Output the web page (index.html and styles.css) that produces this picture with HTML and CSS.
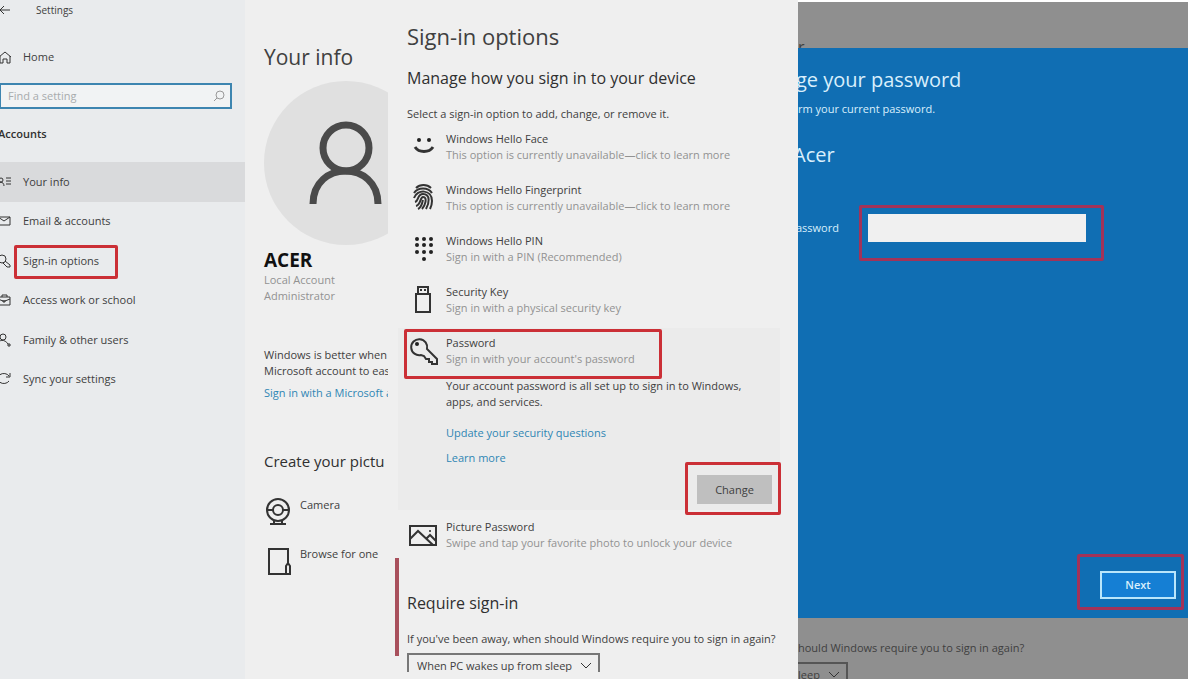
FILE: index.html
```html
<!DOCTYPE html>
<html lang="en">
<head>
  <meta charset="UTF-8" />
  <meta name="viewport" content="width=device-width, initial-scale=1.0"/>
  <title>Settings</title>
  <link rel="stylesheet" href="styles.css">
</head>
<body>
  <div class="page">
    <aside class="sidebar">
      <header class="topbar">
        <button class="back" aria-label="Back">
          <svg width="14" height="12" viewBox="0 0 14 12"><path d="M13 6H3M7 2L3 6l4 4"/></svg>
        </button>
        <span>Settings</span>
      </header>
      <a class="nav-link home" href="#">
        <svg width="14" height="14" viewBox="0 0 14 14"><path d="M2 7l6-5 6 5M3 6v7h3V9h4v4h3V6"/></svg>
        Home
      </a>
      <div class="search">
        <input type="text" placeholder="Find a setting" aria-label="Find a setting">
        <svg width="12" height="12" viewBox="0 0 12 12"><circle cx="7" cy="5" r="4"/><path d="M4 8l-3 3"/></svg>
      </div>
      <h2 class="group">Accounts</h2>
      <nav class="nav">
        <a class="nav-link active" href="#">
          <svg width="14" height="14" viewBox="0 0 14 14"><circle cx="4" cy="5" r="2"/><path d="M1 11c0-5 6-5 6 0M9 3h5M9 6h5M9 9h5"/></svg>
          Your info
        </a>
        <a class="nav-link" href="#">
          <svg width="14" height="14" viewBox="0 0 14 14"><path d="M1 3h12v8H1zM1 3l6 4 6-4"/></svg>
          Email &amp; accounts
        </a>
        <a class="nav-link" href="#">
          <svg width="14" height="14" viewBox="0 0 14 14"><circle cx="5" cy="5" r="4"/><path d="M8 7l5 4v2h-3l-4-4"/></svg>
          <span class="marked mark-nav">Sign-in options</span>
        </a>
        <a class="nav-link" href="#">
          <svg width="14" height="14" viewBox="0 0 14 14"><path d="M1 4h12v8H1zM5 4V2h5v2M1 6l5 2h2l5-2M6 7v2h2V7"/></svg>
          Access work or school
        </a>
        <a class="nav-link" href="#">
          <svg width="14" height="14" viewBox="0 0 14 14"><circle cx="6" cy="4" r="3"/><path d="M1 12c0-6 7-6 10-1M10 12h4M12 10v4"/></svg>
          Family &amp; other users
        </a>
        <a class="nav-link" href="#">
          <svg width="14" height="14" viewBox="0 0 14 14"><path d="M12 9a6 5 0 1 1 0-5M13 1v4H9"/></svg>
          Sync your settings
        </a>
      </nav>
    </aside>

    <section class="info">
      <h1>Your info</h1>
      <svg class="avatar" width="164" height="164" viewBox="0 0 164 164">
        <circle class="disc" cx="82" cy="82" r="82"/>
        <circle cx="82" cy="67" r="23"/>
        <path d="M49 123c0-44 65-44 65 0"/>
      </svg>
      <h2 class="user">ACER</h2>
      <p class="muted">Local Account<br>Administrator</p>
      <p class="better">Windows is better when<br>Microsoft account to eas</p>
      <a class="link" href="#">Sign in with a Microsoft a</a>
      <h2 class="create">Create your pictu</h2>
      <button class="source">
        <svg width="28" height="28" viewBox="0 0 28 28"><circle cx="14" cy="13" r="11"/><circle cx="14" cy="13" r="5"/><path d="M3 13h6M19 13h6M10 23v4M18 23v4M6 27h16"/></svg>
        Camera
      </button>
      <button class="source">
        <svg width="28" height="30" viewBox="0 0 28 30"><path d="M24 18V3H5v25h19M22 28v-8l2-3 2 3v8z"/></svg>
        Browse for one
      </button>
    </section>

    <main class="signin">
      <h1>Sign-in options</h1>
      <h2>Manage how you sign in to your device</h2>
      <p class="lead">Select a sign-in option to add, change, or remove it.</p>

      <div class="option">
        <svg width="32" height="32" viewBox="0 0 32 32"><g class="solid"><circle cx="12" cy="9" r="2"/><circle cx="22" cy="9" r="2"/></g><path class="thick" d="M8 16c4 6 14 6 18 0"/></svg>
        <div><h3>Windows Hello Face</h3><p class="muted">This option is currently unavailable—click to learn more</p></div>
      </div>
      <div class="option">
        <svg width="32" height="32" viewBox="0 0 32 32"><path d="M9 6c4-4 11-4 15 0M7 11c4-6 14-6 18 0M7 16c3-9 18-9 18 3 0 4-1 6-2 8M8 20c4-1 2-8 8-8 8 0 6 10 3 15M9 24c5-1 4-9 7-9 5 0 2 9-1 12M11 27c4-2 4-6 5-9"/></svg>
        <div><h3>Windows Hello Fingerprint</h3><p class="muted">This option is currently unavailable—click to learn more</p></div>
      </div>
      <div class="option">
        <svg width="32" height="32" viewBox="0 0 32 32"><g class="solid"><circle cx="10" cy="6" r="2"/><circle cx="17" cy="6" r="2"/><circle cx="24" cy="6" r="2"/><circle cx="10" cy="12" r="2"/><circle cx="17" cy="12" r="2"/><circle cx="24" cy="12" r="2"/><circle cx="10" cy="19" r="2"/><circle cx="17" cy="19" r="2"/><circle cx="24" cy="19" r="2"/><circle cx="17" cy="26" r="2"/></g></svg>
        <div><h3>Windows Hello PIN</h3><p class="muted">Sign in with a PIN (Recommended)</p></div>
      </div>
      <div class="option">
        <svg width="32" height="32" viewBox="0 0 32 32"><path d="M9 10h14v18H9zM11 10V3h10v7M13 6h2M17 6h2"/></svg>
        <div><h3>Security Key</h3><p class="muted">Sign in with a physical security key</p></div>
      </div>

      <div class="panel">
        <div class="option marked mark-password">
          <svg width="32" height="32" viewBox="0 0 32 32"><path d="M20 14a8 8 0 1 0-6 6l3 1 2 3h3v3h3v2h5v-5z"/><circle class="dot" cx="10" cy="9" r="2"/></svg>
          <div><h3>Password</h3><p class="muted">Sign in with your account's password</p></div>
        </div>
        <div class="details">
          <p>Your account password is all set up to sign in to Windows,<br>apps, and services.</p>
          <a class="link" href="#">Update your security questions</a>
          <a class="link" href="#">Learn more</a>
          <button class="change marked mark-change">Change</button>
        </div>
      </div>

      <div class="option">
        <svg width="32" height="32" viewBox="0 0 32 32"><path d="M3 7h26v19H3zM3 20l8-8 15 14M19 20l4-4 6 6"/><circle class="dot" cx="23" cy="12" r="1"/></svg>
        <div><h3>Picture Password</h3><p class="muted">Swipe and tap your favorite photo to unlock your device</p></div>
      </div>

      <h2 class="require">Require sign-in</h2>
      <label for="wake">If you've been away, when should Windows require you to sign in again?</label>
      <div class="select-clip">
        <select id="wake"><option>When PC wakes up from sleep</option></select>
        <svg width="12" height="8" viewBox="0 0 12 8"><path d="M1 1l5 5 5-5"/></svg>
      </div>
    </main>

    <section class="overlay">
      <div class="behind-top">r</div>
      <form class="dialog">
        <h1>ge your password</h1>
        <p>rm your current password.</p>
        <h2>Acer</h2>
        <div class="field">
          <label for="current">assword</label>
          <span class="marked mark-input"><input type="password" id="current"></span>
        </div>
        <button type="button" class="next marked mark-next">Next</button>
      </form>
      <div class="behind-bottom">
        <p>hould Windows require you to sign in again?</p>
        <div class="select-clip">
          <select aria-label="Require sign-in"><option>leep</option></select>
          <svg width="12" height="8" viewBox="0 0 12 8"><path d="M1 1l5 5 5-5"/></svg>
        </div>
      </div>
    </section>
  </div>
</body>
</html>
```

FILE: styles.css
```css
* {
  box-sizing: border-box;
}
body {
  margin: 0;
  font-family: "Open Sans", "Noto Sans", sans-serif;
  font-size: 11px;
  line-height: 16px;
  color: #404040;
  background: #efefef;
}
h1, h2, h3, p {
  margin: 0;
  font-weight: 400;
}
h1 {
  font-size: 22px;
  line-height: 28px;
}
h2 {
  font-size: 16px;
  line-height: 24px;
  color: #303030;
}
h3 {
  font-size: 11px;
  line-height: 16px;
}
a {
  color: inherit;
  text-decoration: none;
}
button, input, select {
  font: inherit;
  color: inherit;
  border: none;
  border-radius: 0;
}
button {
  padding: 0;
  background: none;
  cursor: pointer;
}
svg {
  flex: none;
  fill: none;
  stroke: #333;
}
.page {
  display: grid;
  grid-template-columns: 245fr 153fr 400fr 390fr;
  min-height: 100vh;
  overflow: hidden;
}
.page > * {
  min-width: 0;
}
.muted {
  color: #929292;
}
.link {
  color: #2f86b4;
}

/* red frames round the things to click */
.marked {
  position: relative;
}
.marked::after {
  content: "";
  position: absolute;
  border: 3px solid #cb2f36;
  border-radius: 2px;
  pointer-events: none;
}
.mark-nav::after {
  inset: -8px -19px -10px -9px;
}
.mark-password::after {
  inset: 1px 118px -1px 6px;
}
.mark-change::after {
  inset: -13px -9px -11px -12px;
}
.mark-input::after {
  inset: -9px -18px -19px -9px;
  border-color: #a23359;
}
.mark-next::after {
  inset: -19px -10px -13px -25px;
  border-color: #a23359;
}

/* left menu */
.sidebar {
  background: #e9ebed;
}
.topbar {
  display: flex;
  align-items: center;
  gap: 25px;
  height: 20px;
  font-size: 10px;
}
.back {
  display: flex;
  margin-left: -3px;
}
.nav-link {
  display: flex;
  align-items: center;
  gap: 12px;
}
.nav-link svg {
  margin-left: -3px;
}
.home {
  margin-top: 29px;
}
.search {
  display: flex;
  align-items: center;
  height: 26px;
  margin: 18px 13px 0 0;
  padding: 0 5px 0 7px;
  border: 2px solid #3d85b0;
  border-left-width: 1px;
  background: #f1f3f4;
}
.search input {
  flex: 1;
  min-width: 0;
  padding: 0;
  background: none;
  outline: none;
}
.search input::placeholder {
  color: #a8abad;
}
.search svg {
  stroke: #999;
}
.group {
  margin-top: 17px;
  margin-left: -2px;
  font-size: 11px;
  line-height: 16px;
  font-weight: 600;
}
.nav {
  display: grid;
  grid-auto-rows: 1fr;
  height: 237px;
  margin-top: 20px;
}
.active {
  background: #d9dadc;
}

/* account summary, cut off on the right */
.info {
  margin-right: 10px;
  padding: 43px 0 0 19px;
  overflow: hidden;
  white-space: nowrap;
}
.info h1 {
  font-size: 21px;
}
.avatar {
  display: block;
  margin-top: 10px;
  stroke: #4a4a4a;
  stroke-width: 7;
}
.avatar .disc {
  fill: #e0e0e0;
  stroke: none;
}
.user {
  margin-top: 3px;
  font-size: 19px;
  font-weight: 700;
  color: #111;
}
.better {
  margin: 43px 0 6px;
}
.create {
  margin: 48px 0 24px;
  font-size: 15px;
}
.source {
  display: flex;
  align-items: flex-start;
  gap: 8px;
  margin-bottom: 21px;
}
.source svg {
  stroke-width: 2;
}

/* sign-in options */
.signin {
  position: relative;
  padding: 22px 0 7px 9px;
}
.signin::before {
  content: "";
  position: absolute;
  left: -3px;
  top: 558px;
  width: 4px;
  height: 98px;
  background: #a8505c;
}
.signin > h2 {
  margin-top: 16px;
}
.lead {
  margin-top: 16px;
}
.option {
  display: flex;
  gap: 7px;
  height: 51px;
  padding-top: 9px;
}
.option svg {
  stroke-width: 2;
}
.option .thick {
  stroke-width: 3;
}
.option .solid, .option .dot {
  fill: #222;
  stroke: none;
}
.panel {
  margin: 2px 18px 0 -9px;
  padding-bottom: 6px;
  background: #ebebeb;
}
.panel .option {
  height: 50px;
  padding: 7px 0 0 9px;
}
.details {
  display: flex;
  flex-direction: column;
  align-items: flex-start;
  gap: 9px;
  padding: 0 8px 0 48px;
}
.details .link:first-of-type {
  margin-top: 6px;
}
.change {
  align-self: flex-end;
  width: 75px;
  height: 29px;
  background: #bfbfbf;
}
.signin > .require {
  margin: 30px 0 16px;
}
.signin label {
  display: block;
  white-space: nowrap;
}
.select-clip {
  display: flex;
  align-items: center;
  position: relative;
  width: 193px;
  height: 19px;
  margin-top: 6px;
  padding-top: 5px;
  border: 2px solid #777;
  border-bottom: none;
  overflow: hidden;
}
.select-clip select {
  width: 100%;
  padding: 0 8px;
  appearance: none;
  background: none;
}
.select-clip svg {
  position: absolute;
  right: 6px;
}

/* password dialog over the dimmed page */
.overlay {
  display: flex;
  flex-direction: column;
  border-top: 2px solid #fff;
  background: #8f8f8f;
  overflow: hidden;
  white-space: nowrap;
}
.behind-top {
  height: 46px;
  padding-top: 34px;
  font-size: 16px;
  line-height: 22px;
  overflow: hidden;
}
.dialog {
  display: flex;
  flex-direction: column;
  height: 570px;
  padding: 18px 12px 19px 0;
  color: #d9effc;
  background: #106eb3;
}
.dialog h1, .dialog h2 {
  font-size: 20px;
  line-height: 28px;
  color: inherit;
}
.dialog h1 {
  margin-left: -2px;
}
.dialog h2 {
  margin: 24px 0 0 -5px;
}
.dialog p {
  margin-top: 7px;
}
.field {
  display: flex;
  align-items: center;
  gap: 29px;
  margin-top: 45px;
}
.field label {
  margin-left: -2px;
}
.field input {
  display: block;
  width: 218px;
  height: 28px;
  background: #f0f0f0;
  color: #222;
}
.next {
  align-self: flex-end;
  width: 76px;
  height: 28px;
  margin-top: auto;
  border: 2px solid #b9e6fb;
  background: #157fd4;
  font-weight: 600;
}
.behind-bottom {
  padding-top: 22px;
}
.behind-bottom .select-clip {
  width: 50px;
  border-color: #555;
  border-left: none;
}
.behind-bottom select {
  padding: 0;
}
```
